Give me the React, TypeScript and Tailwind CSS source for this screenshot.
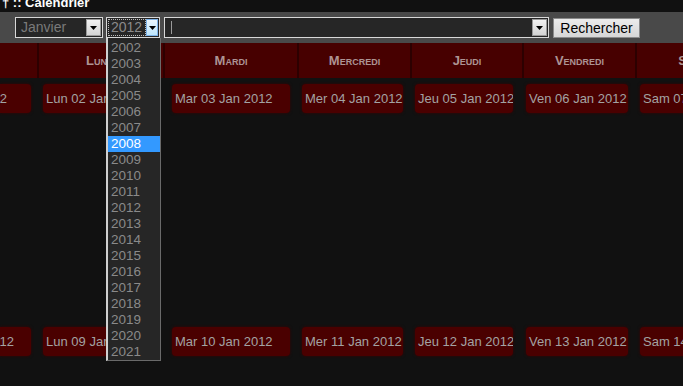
import React from 'react';

type Col = {
  name: string;
  short: string;
  w: string;
  cell: string;
};

const cols: Col[] = [
  { name: 'Lundi', short: 'Lun', w: 'w-[126px]', cell: 'ml-[6px] mr-[8px]' },
  { name: 'Mardi', short: 'Mar', w: 'w-[134px]', cell: 'ml-[9px] mr-[7px]' },
  { name: 'Mercredi', short: 'Mer', w: 'w-[113px]', cell: 'ml-[5px] mr-[7px]' },
  { name: 'Jeudi', short: 'Jeu', w: 'w-[112px]', cell: 'ml-[5px] mr-[9px]' },
  { name: 'Vendredi', short: 'Ven', w: 'w-[113px]', cell: 'ml-[4px] mr-[7px]' },
  { name: 'Samedi', short: 'Sam', w: 'w-[122px]', cell: 'ml-[5px] mr-[8px]' },
];

const weeks = [
  { sunday: 1, pad: 'pr-[24px]' },
  { sunday: 8, pad: 'pr-[17px]' },
];

const years = Array.from({ length: 20 }, (_, i) => 2002 + i);

const pad2 = (n: number) => (n < 10 ? '0' + n : String(n));

function Arrow({ hover = false }: { hover?: boolean }) {
  return (
    <div
      className={
        hover
          ? 'flex h-full w-[16px] items-center justify-center border border-[#7eb4ea] bg-gradient-to-b from-[#eaf6fd] to-[#bee6fd]'
          : 'flex h-full w-[15px] items-center justify-center border border-[#9a9a9a] bg-gradient-to-b from-[#f2f2f2] to-[#d4d4d4]'
      }
    >
      <svg width="7" height="4" viewBox="0 0 7 4">
        <path d="M0 0h7L3.5 4z" fill="#000" />
      </svg>
    </div>
  );
}

export default function App() {
  return (
    <div className="h-[386px] w-full overflow-hidden bg-[#111111] font-['Liberation_Sans',Arial,sans-serif]">
      {/* Title */}
      <div className="h-[12px] overflow-hidden pl-[2px]">
        <div className="-mt-[5px] text-[13px] font-bold leading-[15px] text-white">† :: Calendrier</div>
      </div>

      {/* Search bar */}
      <div className="flex h-[31px] items-center bg-[#494949] pl-[15px]">
        <div className="flex h-[21px] w-[88px] items-center justify-between border border-[#d8d8d8] bg-[#262626] p-[1px]">
          <span className="pl-[4px] text-[14px] text-[#7a7a7a]">Janvier</span>
          <Arrow />
        </div>

        <div className="relative ml-[3px] h-[21px] w-[54px]">
          <div className="flex h-full items-center justify-between border border-[#d8d8d8] bg-[#262626] p-[1px]">
            <span className="flex h-full items-center border border-dotted border-[#bbbbbb] pl-[2px] pr-[3px] text-[14px] text-[#8a8a8a]">
              2012
            </span>
            <Arrow hover />
          </div>
          <ul className="absolute left-0 top-full z-10 w-[55px] border-l-[2px] border-r border-b border-l-[#d0d0d0] border-r-[#6a6a6a] border-b-[#6a6a6a] bg-[#262626] pt-[2px]">
            {years.map((y) => (
              <li
                key={y}
                className={
                  y === 2008
                    ? 'h-[16px] bg-[#3399ff] pl-[3px] text-[13.5px] leading-[16px] text-white'
                    : 'h-[16px] pl-[3px] text-[13.5px] leading-[16px] text-[#8a8a8a]'
                }
              >
                {y}
              </li>
            ))}
          </ul>
        </div>

        <div className="ml-[4px] flex h-[21px] w-[385px] items-center justify-between border border-[#d8d8d8] bg-[#262626] p-[1px]">
          <div className="ml-[5px] h-[13px] w-px bg-[#9a9a9a]" />
          <Arrow />
        </div>

        <button className="ml-[4px] h-[20px] w-[87px] border border-[#8a8a8a] bg-gradient-to-b from-[#ececec] to-[#d6d6d6] text-[14px] leading-none text-black">
          Rechercher
        </button>
      </div>

      {/* Header */}
      <div className="flex h-[35px] bg-[#470000]">
        <div className="w-[37px] shrink-0" />
        {cols.map((c) => (
          <div
            key={c.name}
            className={`${c.w} flex shrink-0 items-center justify-center border-l-[2px] border-[#2c0000] text-[13px] font-bold text-[#ad9494] [font-variant:small-caps]`}
          >
            {c.name}
          </div>
        ))}
      </div>

      {/* Weeks */}
      {weeks.map((wk) => (
        <div key={wk.sunday} className="flex h-[243px]">
          <div className="w-[37px] shrink-0">
            <div
              className={`mt-[6px] flex h-[29px] w-[31px] items-center justify-end overflow-hidden rounded-r-[4px] bg-[#4a0000] ${wk.pad} whitespace-nowrap text-[13px] text-[#a3a3a3] shadow-[0_0_3px_#3a0000]`}
            >
              Dim {pad2(wk.sunday)} Jan 2012
            </div>
          </div>
          {cols.map((c, i) => (
            <div key={c.name} className={`${c.w} shrink-0`}>
              <div
                className={`${c.cell} mt-[6px] flex h-[29px] items-center overflow-hidden whitespace-nowrap rounded-[4px] bg-[#4a0000] pl-[3px] text-[13px] text-[#a3a3a3] shadow-[0_0_3px_#3a0000]`}
              >
                {c.short} {pad2(wk.sunday + i + 1)} Jan 2012
              </div>
            </div>
          ))}
        </div>
      ))}
    </div>
  );
}
